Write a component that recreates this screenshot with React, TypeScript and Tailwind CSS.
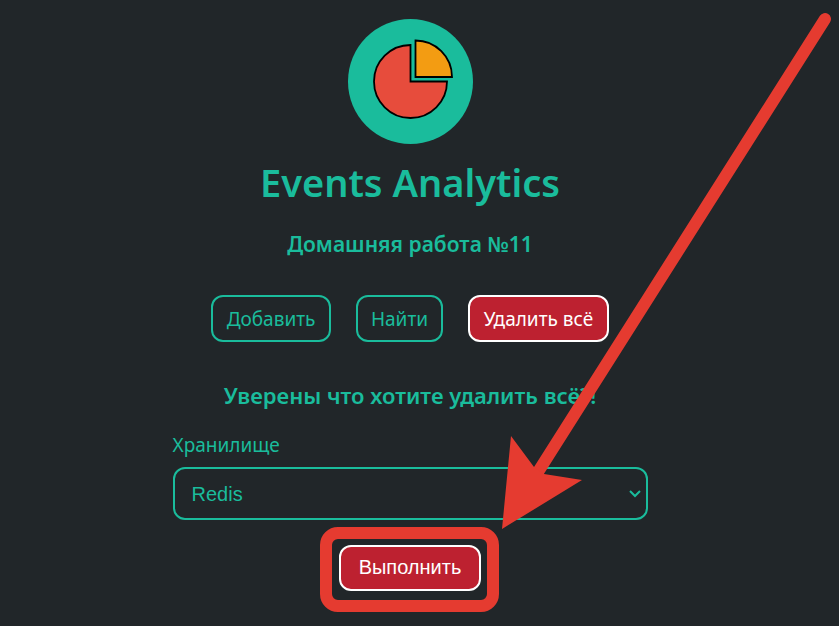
import { useState } from "react";

const storages = ["Redis", "Memcached"];

function Logo() {
  return (
    <svg viewBox="0 0 125 125" className="size-[125px]" role="img" aria-label="Events Analytics">
      <circle cx="62.5" cy="62.5" r="62.5" fill="#1abc9c" />
      <path d="M62.5 62.5V26A36.5 36.5 0 1 0 99 62.5Z" fill="#e74c3c" stroke="#000" strokeWidth="1.8" />
      <path d="M67.5 58V21.5A36.5 36.5 0 0 1 104 58Z" fill="#f39c12" stroke="#000" strokeWidth="1.8" />
    </svg>
  );
}

function Arrow() {
  return (
    <svg
      viewBox="0 0 340 530"
      className="pointer-events-none absolute top-0 left-[329px] h-[530px] w-[340px]"
      aria-hidden="true"
    >
      <path d="M323 19L36 472" stroke="#e53b30" strokeWidth="12" strokeLinecap="round" />
      <path d="M0 529L9 436L32 467L42 474L80 480Z" fill="#e53b30" />
    </svg>
  );
}

export default function App() {
  const [storage, setStorage] = useState("Redis");
  const tab = "h-[47px] rounded-xl border-2 text-[19px] leading-6 whitespace-nowrap";

  return (
    <div className="min-h-screen overflow-hidden bg-[#212629] pr-[19px] font-['Noto_Sans',sans-serif] text-[#1abc9c]">
      <main className="relative mx-auto flex w-full max-w-[475px] flex-col items-center pt-[19px] pb-[34px]">
        <Logo />
        <h1 className="mt-[14px] text-[38px] leading-[48px] font-semibold whitespace-nowrap">Events Analytics</h1>
        <h2 className="mt-6 text-[21px] leading-7 font-semibold whitespace-nowrap">Домашняя работа №11</h2>

        <nav className="mt-[37px] flex gap-[25px]">
          <button type="button" className={`${tab} w-[120px] border-[#1abc9c]`}>Добавить</button>
          <button type="button" className={`${tab} w-[87px] border-[#1abc9c]`}>Найти</button>
          <button type="button" className={`${tab} w-[141px] border-white bg-[#bd2130] text-white`}>Удалить всё</button>
        </nav>

        <h3 className="mt-[39px] text-[22px] leading-7 font-semibold whitespace-nowrap">Уверены что хотите удалить всё?!</h3>

        <form className="flex w-full flex-col items-center" onSubmit={(e) => e.preventDefault()}>
          <label htmlFor="storage" className="mt-6 self-start text-[19px] leading-6">Хранилище</label>
          <div className="relative mt-[10px] w-full">
            <select
              id="storage"
              value={storage}
              onChange={(e) => setStorage(e.target.value)}
              className="h-[53px] w-full appearance-none rounded-xl border-2 border-[#1abc9c] bg-[#212629] px-[17px] font-['Liberation_Sans',sans-serif] text-[20px] text-[#1abc9c]"
            >
              {storages.map((s) => (
                <option key={s}>{s}</option>
              ))}
            </select>
            <svg
              viewBox="0 0 12 8"
              className="pointer-events-none absolute top-[23px] right-[7px] h-2 w-3"
              fill="none"
              stroke="#1abc9c"
              strokeWidth="2"
              aria-hidden="true"
            >
              <path d="M1 1L6 6L11 1" />
            </svg>
          </div>
          <div className="relative mt-[25px]">
            <button
              type="submit"
              className="block h-[46px] w-[142px] rounded-xl border-2 border-white bg-[#bd2130] pb-0.5 font-['Liberation_Sans',sans-serif] text-[20px] leading-6 text-white"
            >
              Выполнить
            </button>
            <div
              className="pointer-events-none absolute -top-[18px] -left-[19px] h-[85px] w-[179px] rounded-[18px] border-[12px] border-[#e53b30]"
              aria-hidden="true"
            />
          </div>
        </form>
        <Arrow />
      </main>
    </div>
  );
}
